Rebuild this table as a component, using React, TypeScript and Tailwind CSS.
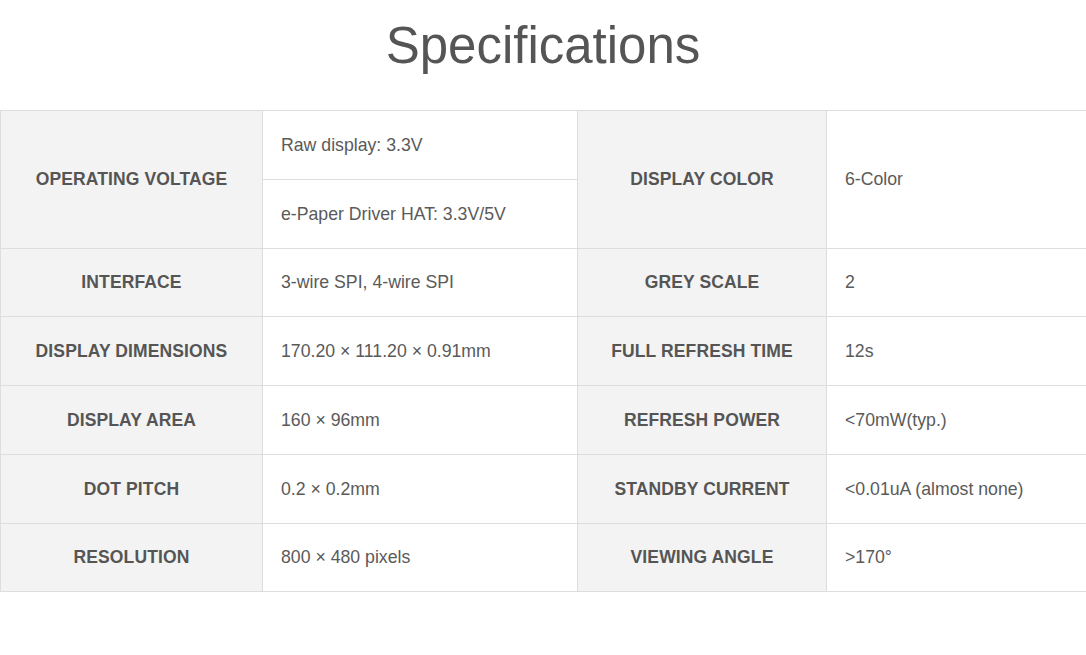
import React from 'react'

const font = { fontFamily: '"Liberation Sans", Arial, sans-serif' }

type Row = { k1: string; v1: string; k2: string; v2: string }

const rows: Row[] = [
  { k1: 'INTERFACE', v1: '3-wire SPI, 4-wire SPI', k2: 'GREY SCALE', v2: '2' },
  { k1: 'DISPLAY DIMENSIONS', v1: '170.20 × 111.20 × 0.91mm', k2: 'FULL REFRESH TIME', v2: '12s' },
  { k1: 'DISPLAY AREA', v1: '160 × 96mm', k2: 'REFRESH POWER', v2: '<70mW(typ.)' },
  { k1: 'DOT PITCH', v1: '0.2 × 0.2mm', k2: 'STANDBY CURRENT', v2: '<0.01uA (almost none)' },
  { k1: 'RESOLUTION', v1: '800 × 480 pixels', k2: 'VIEWING ANGLE', v2: '>170°' },
]

const th = 'border border-[#dddddd] bg-[#f3f3f3] text-center align-middle text-[17.5px] font-bold tracking-[0.12px] text-[#555555]'
const td = 'border border-[#dddddd] bg-white pl-[18px] text-left align-middle text-[17.7px] text-[#5a5a5a]'

export default function App() {
  return (
    <div className="min-h-screen w-full overflow-hidden bg-white" style={font}>
      <h1 className="pt-[17px] text-center text-[51px] font-normal leading-[58px] text-[#555555]">
        Specifications
      </h1>

      <table className="mt-[35px] w-[1087px] table-fixed border-collapse">
        <colgroup>
          <col className="w-[262px]" />
          <col className="w-[315px]" />
          <col className="w-[249px]" />
          <col className="w-[261px]" />
        </colgroup>
        <tbody>
          <tr className="h-[69px]">
            <th rowSpan={2} className={th}>OPERATING VOLTAGE</th>
            <td className={td}>Raw display: 3.3V</td>
            <th rowSpan={2} className={th}>DISPLAY COLOR</th>
            <td rowSpan={2} className={td}>6-Color</td>
          </tr>
          <tr className="h-[69px]">
            <td className={td}>e-Paper Driver HAT: 3.3V/5V</td>
          </tr>
          {rows.map((r, i) => (
            <tr key={r.k1} className={i === 0 || i === 4 ? 'h-[68px]' : 'h-[69px]'}>
              <th className={th}>{r.k1}</th>
              <td className={td}>{r.v1}</td>
              <th className={th}>{r.k2}</th>
              <td className={td}>{r.v2}</td>
            </tr>
          ))}
        </tbody>
      </table>
    </div>
  )
}
